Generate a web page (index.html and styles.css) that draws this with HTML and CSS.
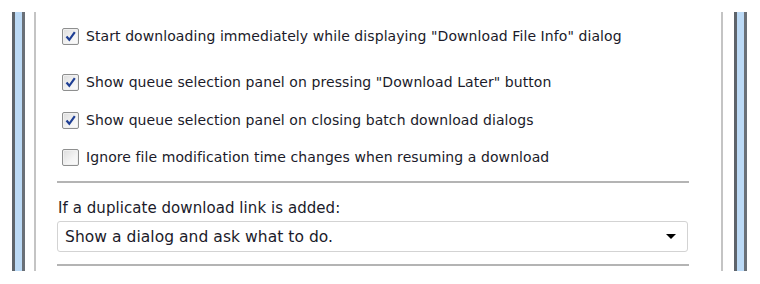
FILE: index.html
```html
<!DOCTYPE html>
<html>
<head>
<meta charset="utf-8">
<link rel="stylesheet" href="styles.css">
</head>
<body>
<div class="window">
  <div class="frame frame-left"><span class="bar-dark"></span><span class="bar-blue"></span><span class="bar-dark2"></span></div>
  <div class="inner-line"></div>
  <div class="content">
    <label class="row row1"><span class="cb checked"><svg viewBox="0 0 17 17" width="17" height="17"><path d="M4.5 8.5 L7.3 11.8 L12.8 4.2" fill="none" stroke="#1f3f94" stroke-width="2.2" stroke-linejoin="miter"/></svg></span><span class="txt">Start downloading immediately while displaying "Download File Info" dialog</span></label>
    <label class="row row2"><span class="cb checked"><svg viewBox="0 0 17 17" width="17" height="17"><path d="M4.5 8.5 L7.3 11.8 L12.8 4.2" fill="none" stroke="#1f3f94" stroke-width="2.2"/></svg></span><span class="txt">Show queue selection panel on pressing "Download Later" button</span></label>
    <label class="row row3"><span class="cb checked"><svg viewBox="0 0 17 17" width="17" height="17"><path d="M4.5 8.5 L7.3 11.8 L12.8 4.2" fill="none" stroke="#1f3f94" stroke-width="2.2"/></svg></span><span class="txt">Show queue selection panel on closing batch download dialogs</span></label>
    <label class="row row4"><span class="cb"></span><span class="txt">Ignore file modification time changes when resuming a download</span></label>
    <div class="sep sep1"></div>
    <div class="dup-label">If a duplicate download link is added:</div>
    <div class="select"><span class="select-text">Show a dialog and ask what to do.</span><span class="arrow"></span></div>
    <div class="sep sep2"></div>
  </div>
  <div class="inner-line"></div>
  <div class="frame frame-right"><span class="bar-dark"></span><span class="bar-blue"></span><span class="bar-dark2"></span></div>
</div>
</body>
</html>
```
FILE: styles.css
```css
html, body {
  margin: 0;
  padding: 0;
  background: #ffffff;
}
body {
  font-family: "DejaVu Sans", sans-serif;
  font-size: 14px;
  color: #1b1b2a;
  width: 760px;
  height: 284px;
  overflow: hidden;
}
.window {
  display: flex;
  margin-top: 12px;
  height: 259px;
  padding-left: 12px;
}
.frame {
  display: flex;
  height: 100%;
}
.frame span { display: block; height: 100%; }
.bar-dark { width: 3px; background: #5e646b; }
.bar-blue { width: 7px; background: #bcdaf6; }
.bar-dark2 { width: 3px; background: #6a7077; }
.frame-left { margin-right: 9px; }
.frame-right { margin-left: 11px; }
.inner-line {
  width: 2px;
  height: 100%;
  background: #c4c4c4;
}
.content {
  width: 685px;
  box-sizing: border-box;
  display: flex;
  flex-direction: column;
  padding-left: 21px;
}
.row {
  display: flex;
  align-items: center;
  height: 18px;
  padding-left: 5px;
}
.row1 { margin-top: 15px; }
.row2 { margin-top: 28px; }
.row3 { margin-top: 20px; }
.row4 { margin-top: 19px; }
.cb {
  width: 15px;
  height: 15px;
  border: 1px solid #8e8f8f;
  border-radius: 2px;
  background: linear-gradient(135deg, #dcdcdc 0%, #f4f4f4 60%, #fbfbfb 100%);
  box-shadow: inset 0 0 0 1px #f0f0f0;
  position: relative;
  flex: none;
}
.cb svg { position: absolute; left: -1px; top: -1px; }
.txt {
  margin-left: 7px;
  white-space: nowrap;
  letter-spacing: 0.08px;
}
.sep {
  width: 632px;
  height: 2px;
  background: #b4b4b4;
}
.sep1 { margin-top: 15px; }
.dup-label {
  margin-top: 16px;
  height: 19px;
  line-height: 19px;
  padding-left: 1px;
  font-size: 15px;
  letter-spacing: 0.06px;
}
.select {
  margin-top: 3px;
  border: 1px solid #d3d3d3;
  border-radius: 3px;
  display: flex;
  align-items: center;
  justify-content: space-between;
  padding: 0 8px 0 7px;
  box-sizing: border-box;
  width: 631px;
  height: 31px;
}
.select-text {
  font-size: 15.5px;
  letter-spacing: 0.05px;
}
.arrow {
  width: 0;
  height: 0;
  border-left: 5px solid transparent;
  border-right: 5px solid transparent;
  border-top: 5px solid #000;
  margin-right: 3px;
}
.sep2 { margin-top: 12px; }
```
